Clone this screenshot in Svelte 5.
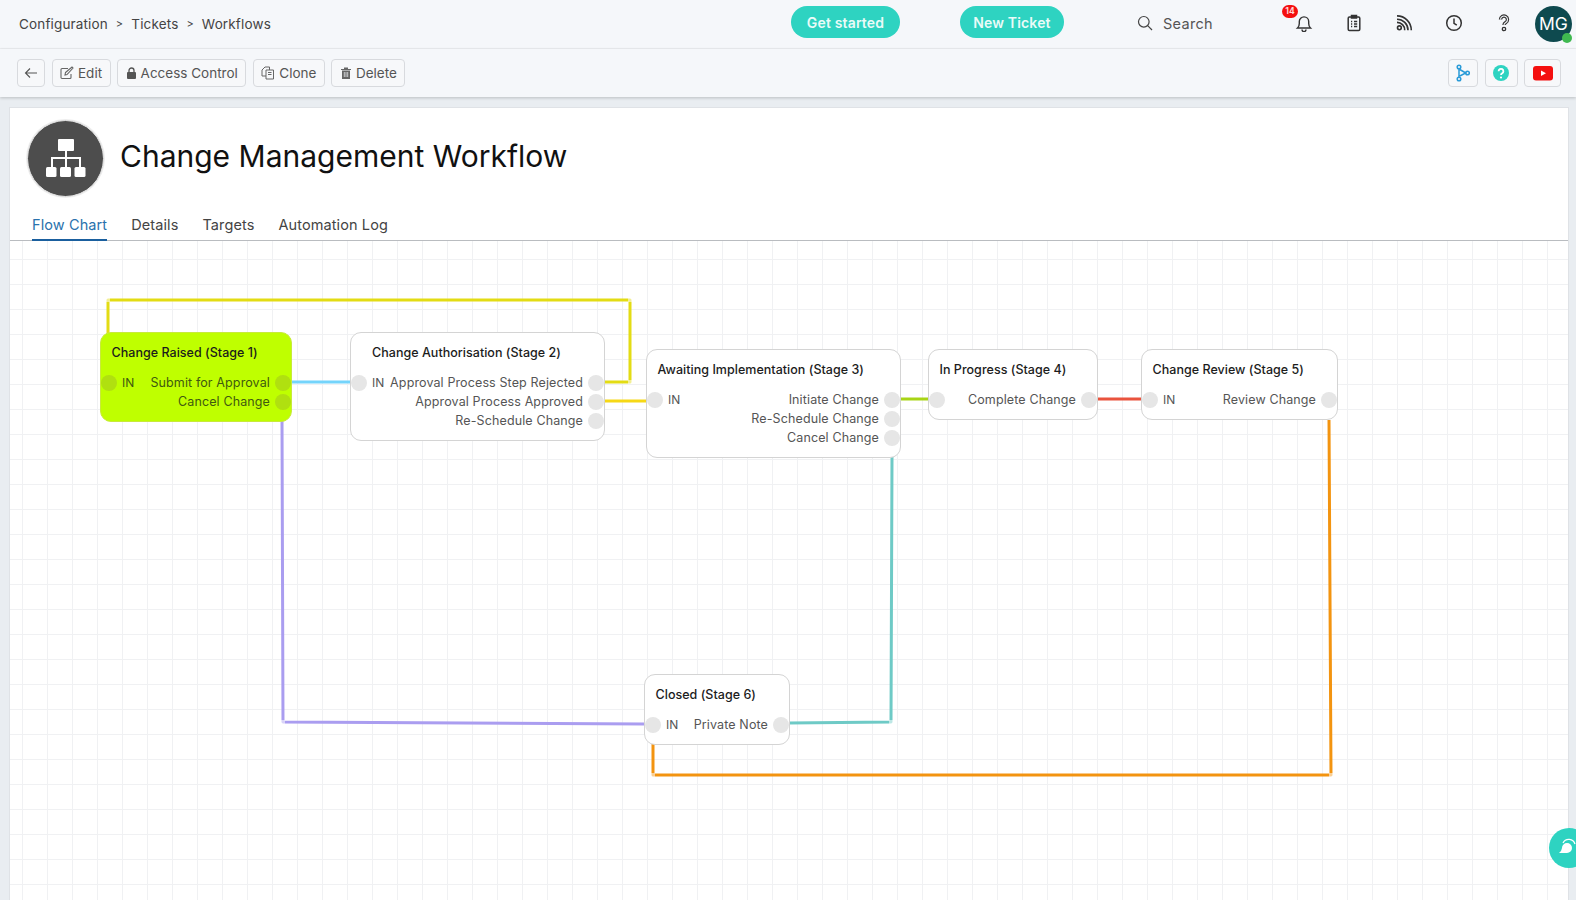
<script>
	const nodes = [
		{ title: 'Change Raised (Stage 1)', x: 100, y: 332, w: 192, start: true, rows: [['Submit for Approval', true], ['Cancel Change', false]] },
		{ title: 'Change Authorisation (Stage 2)', x: 350, y: 332, w: 255, pad: 21, rows: [['Approval Process Step Rejected', true], ['Approval Process Approved', false], ['Re-Schedule Change', false]] },
		{ title: 'Awaiting Implementation (Stage 3)', x: 646, y: 349, w: 255, rows: [['Initiate Change', true], ['Re-Schedule Change', false], ['Cancel Change', false]] },
		{ title: 'In Progress (Stage 4)', x: 928, y: 349, w: 170, noIn: true, rows: [['Complete Change', true]] },
		{ title: 'Change Review (Stage 5)', x: 1141, y: 349, w: 197, rows: [['Review Change', true]] },
		{ title: 'Closed (Stage 6)', x: 644, y: 674, w: 146, rows: [['Private Note', true]] }
	];

	const edges = [
		{ color: '#e3dc14', pts: [[604, 382], [630, 382], [630, 300], [108, 300], [108, 333]] },
		{ color: '#74d4fb', pts: [[292, 382], [352, 382]] },
		{ color: '#f6d816', pts: [[604, 401], [647, 401]] },
		{ color: '#a8d416', pts: [[900, 399], [929, 399]] },
		{ color: '#e9533d', pts: [[1097, 399], [1142, 399]] },
		{ color: '#f39410', pts: [[1329, 420], [1331, 775], [653, 775], [653, 744]] },
		{ color: '#aa9df0', pts: [[282, 421], [283, 722], [644, 724]] },
		{ color: '#6ecac6', pts: [[892, 457], [891, 722], [789, 723]] }
	];

	const cx = 10;
	const cy = 241;
</script>

<div class="page">
	<header class="topbar">
		<nav class="crumbs">
			<span>Configuration</span><i>&gt;</i><span>Tickets</span><i>&gt;</i><span>Workflows</span>
		</nav>
		<div class="actions">
			<button class="pill first">Get started</button>
			<button class="pill">New Ticket</button>
		</div>
		<div class="search">
			<svg width="16" height="16" viewBox="0 0 16 16" fill="none" stroke="#444" stroke-width="1.2"><circle cx="6.8" cy="6.8" r="5.3" /><path d="M10.7 10.7 15 15" /></svg>
			<span>Search</span>
		</div>
		<div class="tools">
			<span class="tool">
				<b class="badge">14</b>
				<svg width="18" height="18" viewBox="0 0 18 18" fill="none" stroke="#333" stroke-width="1.4"><path d="M2.5 14h13c-1.3-1.2-1.8-2.6-1.8-4.6V7.6a4.7 4.7 0 0 0-9.4 0v1.8c0 2-.5 3.4-1.8 4.6Z" /><path d="M7 15.6a2 2 0 0 0 4 0" /></svg>
			</span>
			<span class="tool">
				<svg width="18" height="18" viewBox="0 0 18 18" fill="none" stroke="#333" stroke-width="1.5"><rect x="3.2" y="3" width="11.6" height="13.5" rx="1.2" /><rect x="6.5" y="1.5" width="5" height="2.5" fill="#333" /><path d="M6 7.5h1.2M9 7.5h3.2M6 10h1.2M9 10h3.2M6 12.6h1.2M9 12.6h3.2" /></svg>
			</span>
			<span class="tool">
				<svg width="18" height="18" viewBox="0 0 18 18" fill="none" stroke="#333" stroke-width="1.6"><circle cx="4.4" cy="13.800" r="1.900" /><path d="M2 8.400a7.600 7.600 0 0 1 7.700 7.800M2 5.200a11 11 0 0 1 11 11M2 1.900a14.300 14.300 0 0 1 14.300 14.300" /></svg>
			</span>
			<span class="tool">
				<svg width="18" height="18" viewBox="0 0 18 18" fill="none" stroke="#333" stroke-width="1.5"><circle cx="9" cy="9" r="7.3" /><path d="M9 4.600V9.400l2.800 1.800" /></svg>
			</span>
			<span class="tool">
				<svg width="18" height="18" viewBox="0 0 18 18" fill="none"><path d="M5.500 5.500a3.500 3.500 0 1 1 5.300 3C9.700 9.200 9 9.700 9 11" stroke="#333" stroke-width="3.400" /><path d="M5.500 5.500a3.500 3.500 0 1 1 5.300 3C9.700 9.200 9 9.700 9 11" stroke="#f5f7fa" stroke-width="1.100" /><circle cx="9" cy="15" r="1.700" stroke="#333" stroke-width="1.300" /></svg>
			</span>
		</div>
		<div class="avatar">MG<span class="online"></span></div>
	</header>

	<div class="toolbar">
		<div class="btns">
			<button class="btn square">
				<svg width="14" height="14" viewBox="0 0 14 14" fill="none" stroke="#555" stroke-width="1.1"><path d="M13 7H1.500M6 2.500 1.500 7 6 11.500" /></svg>
			</button>
			<button class="btn">
				<svg width="14" height="14" viewBox="0 0 14 14" fill="none" stroke="#666" stroke-width="1.1"><path d="M11 8v3.500a1 1 0 0 1-1 1H2a1 1 0 0 1-1-1V3.500a1 1 0 0 1 1-1h6" /><path d="M5.500 6.500 12 1l1 1-6 6.500-2 .5Z" /></svg>
				Edit
			</button>
			<button class="btn">
				<svg width="11" height="14" viewBox="0 0 11 14" fill="#555"><rect x="1" y="6" width="9" height="7" rx="1" /><path d="M3 6V4.500a2.500 2.500 0 0 1 5 0V6" fill="none" stroke="#555" stroke-width="1.300" /></svg>
				Access Control
			</button>
			<button class="btn">
				<svg width="14" height="14" viewBox="0 0 14 14" fill="none" stroke="#666" stroke-width="1"><path d="M5 4H12.500V13H5Z" /><path d="M5 10H1V4L4 1H8.500V4" /><path d="M7 6.500h3.500M7 8.500h3.500" /></svg>
				Clone
			</button>
			<button class="btn">
				<svg width="12" height="14" viewBox="0 0 12 14" fill="#666"><path d="M1 3h10v1H1ZM4 1.500h4V3H4ZM2 4.500h8V13H2Z" /><path d="M4.300 6v5M6 6v5M7.700 6v5" stroke="#f7f8fa" stroke-width=".7" /></svg>
				Delete
			</button>
		</div>
		<div class="btns">
			<button class="btn square branch">
				<svg width="14" height="18" viewBox="0 0 14 18" fill="none" stroke="#2a9bd8" stroke-width="1.500"><circle cx="3" cy="3" r="1.800" /><circle cx="3" cy="15" r="1.800" /><circle cx="11.500" cy="9" r="1.800" /><path d="M3 4.800v8.400M3.800 5.500 9.800 9 3.800 12" /></svg>
			</button>
			<button class="btn square help">
				<svg width="16" height="16" viewBox="0 0 16 16"><circle cx="8" cy="8" r="8" fill="#2ed3c1" /><path d="M5.600 6.200a2.400 2.400 0 1 1 3.600 2.100c-.8.500-1.200.8-1.200 1.700" fill="none" stroke="#fff" stroke-width="1.800" /><circle cx="8" cy="12.500" r="1.100" fill="#fff" /></svg>
			</button>
			<button class="btn square yt">
				<svg width="20" height="15" viewBox="0 0 20 15"><rect width="20" height="14.500" rx="3" fill="#f40f0f" /><path d="M8 4.500 13 7.250 8 10Z" fill="#fff" /></svg>
			</button>
		</div>
	</div>

	<main class="card">
		<div class="head">
			<div class="logo">
				<svg width="40" height="40" viewBox="0 0 40 40" fill="#fff"><rect x="12" y="0" width="16" height="12" rx="1" /><rect x="0" y="28" width="10.500" height="10" rx="1.500" /><rect x="14" y="28" width="11" height="10" rx="1.500" /><rect x="28.500" y="28" width="11" height="10" rx="1.500" /><path d="M19 12h2v6h14v10h-2v-8H21v8h-2v-8H7v8H5V18h14Z" /></svg>
			</div>
			<h1>Change Management Workflow</h1>
		</div>
		<div class="tabs">
			<span class="tab active">Flow Chart</span>
			<span class="tab">Details</span>
			<span class="tab">Targets</span>
			<span class="tab">Automation Log</span>
		</div>
		<div class="canvas">
			<svg class="edges" width="1558" height="659" viewBox="{cx} {cy} 1558 659" fill="none">
				{#each edges as e}
					<polyline points={e.pts.map((p) => p.join(',')).join(' ')} stroke={e.color} stroke-width="3" stroke-linejoin="round" />
					{#each e.pts.slice(1, -1) as p}
						<rect x={p[0] - 2} y={p[1] - 2} width="4" height="4" fill="#fff" opacity="0.55" />
					{/each}
				{/each}
			</svg>
			{#each nodes as n}
				<div class="node" class:start={n.start} style="left:{n.x - cx}px;top:{n.y - cy}px;width:{n.w}px">
					<div class="title" style="padding-left:{n.pad || 10.5}px">{n.title}</div>
					{#each n.rows as r}
						<div class="row">
							{#if r[1]}
								<span class="port"></span>
								{#if !n.noIn}<span class="in">IN</span>{/if}
							{/if}
							<span class="label">{r[0]}</span>
							<span class="port"></span>
						</div>
					{/each}
				</div>
			{/each}
		</div>
	</main>

	<div class="chat">
		<svg width="22" height="20" viewBox="0 0 22 20"><path d="M5 6a5 5 0 1 1 5 5H2l2-2Z" transform="translate(0 4)" fill="#fff" /><path d="M6 5a6.500 6.500 0 0 1 12 1" fill="none" stroke="#fff" stroke-width="1.300" /></svg>
	</div>
</div>

<style>
	:global(body) {
		margin: 0;
		font-family: Inter, 'Noto Sans', sans-serif;
		overflow: hidden;
	}
	.page {
		position: relative;
		display: flex;
		flex-direction: column;
		height: 900px;
		overflow: hidden;
		background: #e9edf1;
	}
	.topbar {
		display: flex;
		align-items: center;
		box-sizing: border-box;
		height: 49px;
		flex: none;
		background: #f5f7fa;
		border-bottom: 1px solid #eceef1;
		padding: 0 4px 2px 19px;
	}
	.crumbs {
		display: flex;
		align-items: center;
		flex: none;
		width: 772px;
		margin-top: 2px;
		font-size: 13.5px;
		letter-spacing: 0.15px;
		color: #444;
	}
	.crumbs i {
		font-style: normal;
		font-size: 11px;
		margin: 0 8px;
	}
	.actions {
		display: flex;
		flex: none;
		gap: 60px;
		width: 346px;
	}
	.pill {
		height: 32px;
		width: 104px;
		border: 0;
		border-radius: 16px;
		background: #2ed3c1;
		color: #eafbf8;
		font: 600 14px Inter, sans-serif;
		letter-spacing: 0.15px;
		padding: 0;
		margin-top: -2px;
	}
	.pill.first {
		width: 109px;
	}
	.search {
		display: flex;
		align-items: center;
		flex: none;
		gap: 10px;
		width: 142px;
		font-size: 14.5px;
		letter-spacing: 0.3px;
		color: #555;
	}
	.tools {
		display: flex;
		flex: none;
		width: 250px;
	}
	.tool {
		position: relative;
		display: flex;
		justify-content: center;
		width: 50px;
	}
	.badge {
		position: absolute;
		left: 3px;
		top: -9px;
		width: 16px;
		height: 13px;
		border-radius: 7px;
		background: #f40f0f;
		color: #ffd5d5;
		font-size: 8.5px;
		line-height: 13px;
		text-align: center;
	}
	.avatar {
		position: relative;
		flex: none;
		width: 37px;
		height: 36px;
		margin-left: 6px;
		margin-top: 2px;
		border-radius: 50%;
		background: #0e4a4f;
		color: #fff;
		font-size: 17.5px;
		line-height: 36px;
		text-align: center;
	}
	.online {
		position: absolute;
		right: 0;
		bottom: -1px;
		width: 10px;
		height: 10px;
		border-radius: 50%;
		background: #3fb950;
	}
	.toolbar {
		position: relative;
		display: flex;
		justify-content: space-between;
		align-items: center;
		box-sizing: border-box;
		height: 48px;
		flex: none;
		padding: 0 15px 0 17px;
		background: #f5f7fa;
		box-shadow: 0 1px 3px rgba(0, 0, 0, 0.2);
	}
	.btns {
		display: flex;
		gap: 6.5px;
	}
	.btn {
		display: flex;
		align-items: center;
		justify-content: center;
		gap: 4px;
		box-sizing: border-box;
		height: 28px;
		min-width: 28px;
		padding: 0 7.5px;
		border: 1px solid #d8dade;
		border-radius: 4px;
		background: #f7f8fa;
		color: #555;
		font: 13.5px Inter, sans-serif;
	}
	.square {
		padding: 0;
	}
	.branch {
		width: 30px;
	}
	.help {
		width: 33px;
	}
	.yt {
		width: 37px;
	}
	.card {
		display: flex;
		flex-direction: column;
		flex: 1;
		margin: 11px 8px 0 10px;
		background: #fff;
		box-shadow: 0 0 0 1px #dfe2e6;
	}
	.head {
		display: flex;
		align-items: center;
		gap: 16px;
		padding: 12px 0 0 17px;
	}
	.logo {
		display: flex;
		align-items: center;
		justify-content: center;
		box-sizing: border-box;
		width: 77px;
		height: 77px;
		border-radius: 50%;
		background: #4d4d4d;
		border: 1px solid #e3e3e3;
		box-shadow: 0 0 0 1px #eee;
	}
	h1 {
		margin: 0 0 6px;
		font-size: 30px;
		font-weight: 400;
		color: #111;
	}
	.tabs {
		display: flex;
		gap: 24px;
		padding: 18px 0 0 22px;
		height: 25px;
		flex: none;
		border-bottom: 1px solid #b9bcc0;
	}
	.tab {
		font-size: 14.5px;
		letter-spacing: 0.1px;
		color: #444;
		line-height: 20px;
		box-sizing: border-box;
		height: 26px;
	}
	.active {
		color: #2a72ad;
		border-bottom: 2px solid #1a5f9e;
	}
	.canvas {
		position: relative;
		flex: 1;
		background-color: #fff;
		background-image: linear-gradient(to right, #f0f1f3 1px, transparent 1px), linear-gradient(to bottom, #f0f1f3 1px, transparent 1px);
		background-size: 25px 25px;
		background-position: 12px 18px;
	}
	.edges {
		position: absolute;
		left: 0;
		top: 0;
	}
	.node {
		position: absolute;
		box-sizing: border-box;
		padding-bottom: 10px;
		background: #fff;
		border: 1px solid #d4d4d4;
		border-radius: 11px;
		font-size: 12.500px;
	}
	.start {
		background: #bfff00;
		border-color: #c8ea3c;
		--port: #b0e010;
	}
	.title {
		height: 40px;
		line-height: 39px;
		font-weight: 500;
		color: #1c1c1c;
		letter-spacing: 0.03px;
	}
	.row {
		display: flex;
		align-items: center;
		gap: 5px;
		height: 19px;
		color: #555;
		letter-spacing: 0.12px;
	}
	.start .row {
		color: #3f5a10;
	}
	.label {
		flex: 1;
		text-align: right;
		white-space: nowrap;
	}
	.port {
		flex: none;
		width: 16px;
		height: 16px;
		border-radius: 50%;
		background: var(--port, #e6e6e6);
	}
	.in {
		font-size: 12px;
	}
	.chat {
		position: absolute;
		left: 1549px;
		top: 828px;
		display: flex;
		align-items: center;
		width: 40px;
		height: 40px;
		padding-left: 8px;
		box-sizing: border-box;
		border-radius: 50%;
		background: #2ed3c1;
	}
</style>
